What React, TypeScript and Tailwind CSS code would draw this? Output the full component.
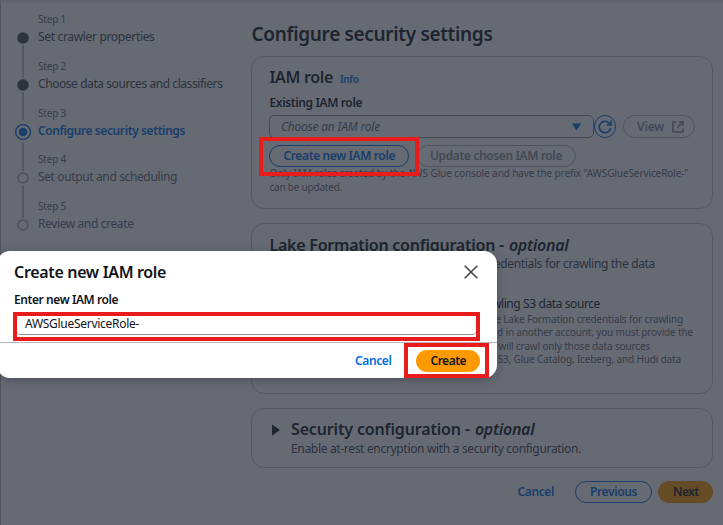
import { ReactNode } from "react";

type StepState = "done" | "active" | "todo";

type Step = {
  label: string;
  title: string;
  state: StepState;
  tracking: string;
  line?: [number, number];
};

const steps: Step[] = [
  { label: "Step 1", title: "Set crawler properties", state: "done", tracking: "tracking-[-0.33px]", line: [33, 66] },
  { label: "Step 2", title: "Choose data sources and classifiers", state: "done", tracking: "tracking-[-0.43px]", line: [33, 61] },
  { label: "Step 3", title: "Configure security settings", state: "active", tracking: "tracking-[-0.4px]", line: [37, 65] },
  { label: "Step 4", title: "Set output and scheduling", state: "todo", tracking: "tracking-[-0.37px]", line: [33, 66] },
  { label: "Step 5", title: "Review and create", state: "todo", tracking: "tracking-[-0.38px]" },
];

function StepMarker({ state, line }: { state: StepState; line?: [number, number] }) {
  return (
    <svg width="18" height="46" className="block shrink-0 overflow-visible" fill="none">
      {state === "done" && <circle cx="9" cy="26" r="5.8" fill="#424650" />}
      {state === "active" && (
        <>
          <circle cx="9" cy="26" r="7.4" stroke="#006ce0" strokeWidth="1.4" />
          <circle cx="9" cy="26" r="4.3" fill="#006ce0" />
        </>
      )}
      {state === "todo" && <circle cx="9" cy="26" r="5" stroke="#a4a4ad" strokeWidth="1.4" />}
      {line && <path d={`M9 ${line[0]}V${line[1]}`} stroke="#b9b9c0" strokeWidth="1.7" />}
    </svg>
  );
}

function Steps() {
  return (
    <nav className="w-[251px] shrink-0 border-l border-[#b4b4bb] pt-3 pl-[13px]">
      {steps.map((s) => (
        <div key={s.label} className="flex h-[46.75px]">
          <StepMarker state={s.state} line={s.line} />
          <div className="pl-[6px]">
            <div className="h-[15px] text-[10px] leading-[15px] tracking-[-0.2px] text-[#656871]">{s.label}</div>
            <div
              className={`${s.tracking} h-5 text-[12px] leading-5 ${
                s.state === "active" ? "font-semibold text-[#006ce0]" : s.state === "done" ? "text-[#424650]" : "text-[#656871]"
              }`}
            >
              {s.title}
            </div>
          </div>
        </div>
      ))}
    </nav>
  );
}

function Card({ className, children }: { className: string; children: ReactNode }) {
  return <section className={`w-[462px] rounded-[13px] border border-[#c6c6cd] pl-[17px] ${className}`}>{children}</section>;
}

function Main() {
  return (
    <main className="flex w-[462px] shrink-0 flex-col pt-[22px] text-[#0f141a]">
      <h1 className="h-[34px] pl-[0.5px] text-[19px] leading-6 font-semibold tracking-[-0.33px]">Configure security settings</h1>

      <Card className="h-[153px]">
        <div className="flex h-6 items-baseline pt-[8px] leading-6">
          <h2 className="pl-[0.5px] text-[16px] font-semibold tracking-[-0.32px]">IAM role</h2>
          <span className="pl-[7px] text-[10px] font-semibold tracking-[-0.37px] text-[#006ce0]">Info</span>
        </div>
        <div className="mt-[12px] h-[22px] pl-[0.5px] text-[12px] leading-[20px] font-semibold tracking-[-0.37px]">
          Existing IAM role
        </div>
        <div className="flex h-[23px]">
          <div className="flex w-[325px] items-center justify-between rounded-[5px] border border-[#8c8c94] pr-[12px] pl-[11px]">
            <span className="text-[12px] leading-5 tracking-[-0.22px] text-[#656871] italic">Choose an IAM role</span>
            <svg width="9" height="8" className="mt-px">
              <path d="M0 0.5H9L4.5 7.5Z" fill="#006ce0" />
            </svg>
          </div>
          <div className="flex w-[22px] items-center justify-center rounded-full border border-[#006ce0]">
            <svg width="14" height="14" viewBox="0 0 14 14" className="shrink-0" fill="none" stroke="#006ce0" strokeWidth="1.7">
              <path d="M12.6 7.8A5.7 5.7 0 1 1 10.8 2.8L12.8 4.8" />
              <path d="M13 0.6V5H8.6" />
            </svg>
          </div>
          <div className="ml-[7px] flex w-[72px] items-center rounded-full border border-[#b4b4bb] pl-[13px] text-[#8c8c94]">
            <span className="w-[35px] text-[12px] leading-5 font-semibold tracking-[-0.17px]">View</span>
            <svg width="12" height="12" viewBox="0 0 12 12" fill="none" stroke="currentColor" strokeWidth="1.6">
              <path d="M4.5 1H1V11H11V7.5M7 1H11V5M11 1L5.5 6.5" />
            </svg>
          </div>
        </div>
        <div className="mt-[7px] flex h-[22px] text-[12px] leading-[20px] font-semibold">
          <div className="w-[140px] rounded-full border border-[#006ce0] pl-[13.5px] tracking-[-0.38px] text-[#006ce0]">
            Create new IAM role
          </div>
          <div className="ml-[8px] w-[159px] rounded-full border border-[#b4b4bb] pl-[12px] tracking-[-0.38px] text-[#8c8c94]">
            Update chosen IAM role
          </div>
        </div>
        <p className="pl-[0.5px] text-[10px] leading-[13.5px] whitespace-nowrap text-[#656871]">
          <span className="block tracking-[-0.1px]">
            Only IAM roles created by the AWS Glue console and have the prefix &quot;AWSGlueServiceRole-&quot;
          </span>
          <span className="block tracking-[-0.21px]">can be updated.</span>
        </p>
      </Card>

      <Card className="mt-[14px] h-[171px] whitespace-nowrap">
        <h2 className="mt-[9px] flex h-6 gap-[5px] pl-[0.5px] text-[16px] leading-6 font-semibold">
          <span className="tracking-[-0.24px]">Lake Formation configuration -</span>
          <em className="tracking-[-0.3px]">optional</em>
        </h2>
        <p className="-mt-[3px] w-[386px] text-right text-[12px] leading-5 tracking-[-0.33px] text-[#424650]">
          credentials for crawling the data
        </p>
        <p className="mt-[20px] w-[331px] text-right text-[12px] leading-5 tracking-[-0.4px]">crawling S3 data source</p>
        <div className="-mt-[1px] text-right text-[10px] leading-[13.4px] tracking-[-0.155px] text-[#656871]">
          <p className="w-[414px]">the Lake Formation credentials for crawling</p>
          <p className="w-[424px]">d in another account, you must provide the</p>
          <p className="w-[381px]">will crawl only those data sources</p>
          <p className="w-[412px]">S3, Glue Catalog, Iceberg, and Hudi data</p>
        </div>
      </Card>

      <Card className="mt-[14px] flex h-[60px] pt-[8px]">
        <svg width="22" height="24" className="shrink-0">
          <path d="M3 7.5L11 13L3 18.5Z" fill="#0f141a" />
        </svg>
        <div>
          <h2 className="flex h-[22px] gap-[5px] text-[16px] leading-6 font-semibold">
            <span className="tracking-[-0.15px]">Security configuration -</span>
            <em className="tracking-[-0.3px]">optional</em>
          </h2>
          <p className="text-[12px] leading-5 tracking-[-0.325px] text-[#424650]">
            Enable at-rest encryption with a security configuration.
          </p>
        </div>
      </Card>

      <div className="mt-[13px] flex h-[22px] justify-end text-[12px] leading-[20px] font-semibold text-[#006ce0]">
        <span className="mr-[21px] py-px tracking-[-0.38px]">Cancel</span>
        <span className="mr-[6px] w-[77px] rounded-full border border-[#006ce0] pl-[14px] tracking-[-0.39px]">Previous</span>
        <span className="w-[55px] rounded-full bg-[#ff9900] py-px pl-[15px] tracking-[-0.6px] text-[#0f141a]">Next</span>
      </div>
    </main>
  );
}

function Modal() {
  return (
    <div className="absolute top-[251px] -left-[3px] flex h-[127px] w-[500px] flex-col rounded-[13px] bg-white text-[#0f141a] shadow-[0_2px_10px_rgba(0,7,22,0.25)]">
      <div className="flex h-[38px] justify-between pt-[9px] pr-[19px] pl-[17px]">
        <h2 className="text-[16px] leading-6 font-semibold tracking-[-0.33px]">Create new IAM role</h2>
        <svg width="14" height="14" viewBox="0 0 14 14" className="mt-[5px]" stroke="#424650" strokeWidth="1.6">
          <path d="M0.7 0.7L13.3 13.3M13.3 0.7L0.7 13.3" />
        </svg>
      </div>
      <div className="h-[23px] pl-[17px] text-[12px] leading-[22px] font-semibold tracking-[-0.42px]">Enter new IAM role</div>
      <div className="ml-[16px] h-[29px] w-[467px] border-4 border-[#e91c1c]">
        <div className="h-[19px] rounded-b-[4px] border-b border-[#8c8c94] pl-[8px] text-[12px] leading-[16px] tracking-[-0.28px]">
          AWSGlueServiceRole-
        </div>
      </div>
      <div className="mt-px flex h-[36px] justify-end border-t border-[#b6b6bb] pr-2 text-[12px] font-semibold">
        <span className="mr-[12.5px] leading-[35px] tracking-[-0.38px] text-[#006ce0]">Cancel</span>
        <div className="h-[35px] w-[85px] border-4 border-[#e91c1c] pt-[3px] pl-[8px]">
          <div className="h-[22px] w-[64px] rounded-full bg-[#ff9900] pl-[14.5px] leading-[21px] tracking-[-0.5px]">Create</div>
        </div>
      </div>
    </div>
  );
}

export default function App() {
  return (
    <div className="relative flex h-[525px] w-[723px] overflow-hidden bg-white font-['Noto_Sans','Open_Sans',sans-serif]">
      <Steps />
      <Main />
      <div className="absolute inset-0 bg-[rgba(35,43,55,0.7)]" />
      <div className="absolute inset-x-0 top-0 h-1 bg-linear-to-b from-[#5c616c] to-transparent" />
      <div className="absolute top-[137px] left-[259px] h-[39px] w-[160px] border-4 border-[#e91c1c]" />
      <Modal />
    </div>
  );
}
